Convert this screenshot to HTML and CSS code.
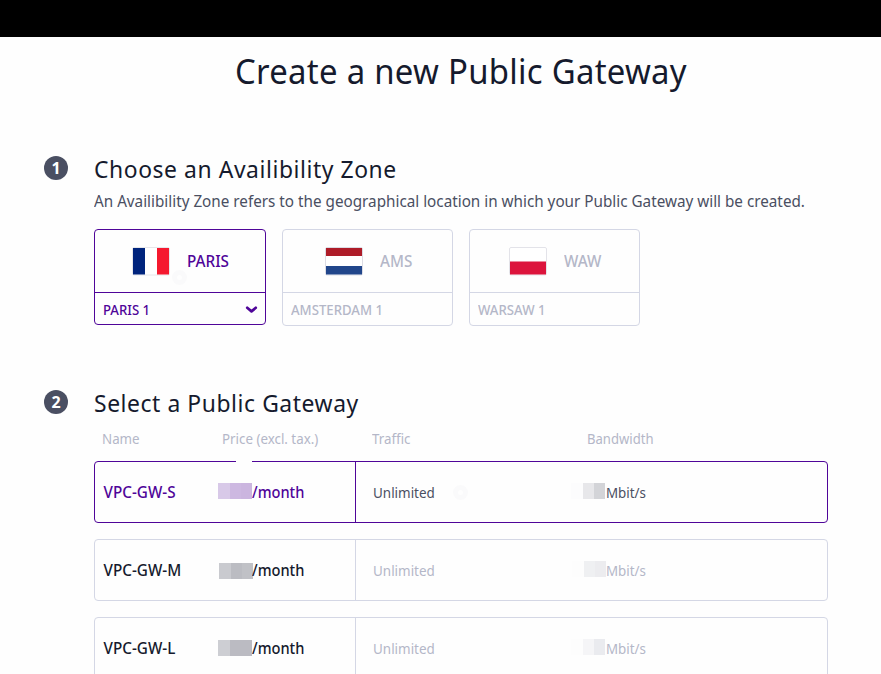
FILE: index.html
```html
<!DOCTYPE html>
<html lang="en">
<head>
<meta charset="utf-8">
<title>Create a new Public Gateway</title>
<link rel="stylesheet" href="styles.css">
</head>
<body>
<header class="topbar"></header>
<main>
  <h1><span>Create a new Public Gateway</span></h1>

  <section class="step zone">
    <span class="badge">1</span>
    <div class="content">
      <h2><span>Choose an Availibility Zone</span></h2>
      <p class="desc"><span>An Availibility Zone refers to the geographical location in which your Public Gateway will be created.</span></p>
      <div class="cards">
        <div class="card selected">
          <div class="region">
            <svg class="flag" width="38" height="29" viewBox="0 0 38 29"><rect x=".5" y=".5" width="37" height="27.5" rx="1.5" fill="#fff" stroke="#e6e6ea"/><path fill="#00247d" d="M1 1h12v26.5H1z"/><path fill="#f5192f" d="M25 1h12v26.5H25z"/></svg>
            <span>PARIS</span>
            <i class="dot"></i>
          </div>
          <div class="az"><span>PARIS 1</span>
            <svg width="13" height="9" viewBox="0 0 13 9"><path d="M2.2 2.8l4.3 3.6L10.8 2.8" fill="none" stroke="#4f0599" stroke-width="2.7" stroke-linecap="round" stroke-linejoin="round"/></svg>
          </div>
        </div>
        <div class="card ams">
          <div class="region">
            <svg class="flag" width="38" height="29" viewBox="0 0 38 29"><rect x=".5" y=".5" width="37" height="27.5" rx="1.5" fill="#fff" stroke="#dcdce4"/><path fill="#ae1c28" d="M1 1h36v8H1z"/><path fill="#21468b" d="M1 19h36v8.5H1z"/></svg>
            <span>AMS</span>
          </div>
          <div class="az"><span>AMSTERDAM 1</span></div>
        </div>
        <div class="card waw">
          <div class="region">
            <svg class="flag" width="38" height="29" viewBox="0 0 38 29"><rect x=".5" y=".5" width="37" height="27.5" rx="1.5" fill="#fff" stroke="#e3e3e9"/><path fill="#dc143c" d="M1 14.5h36v13H1z"/></svg>
            <span>WAW</span>
          </div>
          <div class="az"><span>WARSAW 1</span></div>
        </div>
      </div>
    </div>
  </section>

  <section class="step">
    <span class="badge">2</span>
    <div class="content">
      <h2><span>Select a Public Gateway</span></h2>
      <div class="grid head"><span>Name</span><span>Price (excl. tax.)</span><span>Traffic</span><span>Bandwidth</span></div>
      <div class="grid row selected">
        <i class="notch"></i>
        <strong>VPC-GW-S</strong>
        <div class="price"><i class="mask violet"></i><strong>/month</strong></div>
        <div class="traffic"><span>Unlimited</span><i class="dot"></i></div>
        <div class="band"><i class="mask rate"></i><span>Mbit/s</span></div>
      </div>
      <div class="grid row medium">
        <strong>VPC-GW-M</strong>
        <div class="price"><i class="mask gray"></i><strong>/month</strong></div>
        <div class="traffic"><span>Unlimited</span></div>
        <div class="band"><i class="mask rate"></i><span>Mbit/s</span></div>
      </div>
      <div class="grid row large">
        <strong>VPC-GW-L</strong>
        <div class="price"><i class="mask gray"></i><strong>/month</strong></div>
        <div class="traffic"><span>Unlimited</span></div>
        <div class="band"><i class="mask rate"></i><span>Mbit/s</span></div>
      </div>
    </div>
  </section>
</main>
</body>
</html>
```
FILE: styles.css
```css
* { box-sizing: border-box; }
html { height: 100%; overflow: hidden; }
body {
  margin: 0;
  height: 674px;
  overflow: hidden;
  background: #fefefe;
  color: #151a2d;
  font-family: "Noto Sans", "Open Sans", sans-serif;
  white-space: nowrap;
}
.topbar { height: 37px; background: #000; }
h1, h2, p { margin: 0; font-weight: 400; }

/* Slightly narrowed lettering */
h1 span, h2 span, .desc span, .region span, .az span, .grid span, .grid strong {
  display: inline-block;
  transform: scaleX(.953);
  transform-origin: left;
}

h1 {
  padding: 10px 0 0 235px;
  font-size: 34.5px;
  line-height: 48px;
  letter-spacing: .3px;
}
h2 { font-size: 24px; line-height: 32px; letter-spacing: .6px; }
.step { display: flex; padding-left: 44px; }
.zone { margin-top: 58px; height: 234px; }
.badge {
  width: 24px;
  height: 24px;
  margin: 3px 26px 0 0;
  border-radius: 50%;
  background: #4a4f62;
  color: #fff;
  font: bold 16px/25px "Noto Sans", sans-serif;
  text-align: center;
}
.content { width: 734px; }
.desc { margin-top: 4px; font-size: 16px; line-height: 24px; color: #4a4f62; }
.cards { display: flex; align-items: flex-start; gap: 16px; margin-top: 16px; }
.card {
  width: 171px;
  height: 97px;
  border: 1px solid #d4d7e5;
  border-radius: 4px;
  color: #b4b7c8;
  font-weight: 500;
}
.card.selected { width: 172px; height: 96px; border-color: #4f0599; color: #4f0599; }
.region {
  position: relative;
  display: flex;
  align-items: center;
  height: 63px;
  padding-left: 37px;
  border-bottom: 1px solid #d4d7e5;
}
.selected .region { border-color: #4f0599; }
.region span { margin-left: 17px; }
.ams .region { padding-left: 42px; }
.waw .region { padding-left: 39px; }
.az {
  display: flex;
  align-items: center;
  justify-content: space-between;
  height: 33px;
  padding: 0 7px 0 8px;
  font-size: 14px;
}
.az span { transform: scaleX(.94); }
.grid { display: grid; grid-template-columns: 123px 137px 214px 1fr; align-items: center; }
.head {
  grid-template-columns: 120px 150px 215px 1fr;
  height: 24px;
  margin: 7px 0 11px;
  padding: 1px 0 0 8px;
  font-size: 14px;
  color: #b4b7c8;
}
.head span:last-child { transform: scaleX(.935); }
.row {
  position: relative;
  height: 62px;
  margin-bottom: 16px;
  border: 1px solid #d4d7e5;
  border-radius: 4px;
}
.row strong { font-weight: 500; font-size: 16px; }
.row > strong { padding-left: 9px; }
.price { display: flex; align-items: center; height: 60px; border-right: 1px solid #d4d7e5; width: 138px; }
.price strong { transform: scaleX(.915); }
.traffic { display: flex; align-items: center; padding-left: 18px; font-size: 14px; color: #b4b7c8; }
.traffic span { transform: scaleX(.96); }
.band { display: flex; align-items: center; padding-left: 2px; font-size: 14px; color: #b4b7c8; }
.row.selected { border-color: #4f0599; color: #4f0599; }
.selected .price { border-color: #4f0599; }
.selected .traffic, .selected .band { color: #4a4f62; }
.mask { width: 34px; height: 16px; margin-top: -3px; }
.violet { background: linear-gradient(90deg, #d8c9e8 12px, #cdb8e1 12px 23px, #cbb5df 23px); }
.gray { background: linear-gradient(90deg, #c9cacf 12px, #bbbcc2 12px 23px, #c0c1c6 23px); }
.medium .price .mask { margin-top: 1px; margin-left: 1px; margin-right: -1px; }
.large .gray { background: linear-gradient(90deg, #cdced3 12px, #bbbbc2 12px); margin-top: -1px; }
.rate { background: linear-gradient(90deg, #fcfcfd 12px, #e7e7ea 12px 23px, #d3d4d8 23px); }
.band span { position: relative; left: .5px; }
.medium .rate { margin-left: 1px; margin-right: -1px; background: linear-gradient(90deg, #fdfdfd 12px, #eff0f2 12px 23px, #ececef 23px); }
.large .rate { background: linear-gradient(90deg, #fdfdfd 12px, #f5f5f7 12px 23px, #eaebef 23px); }
.dot { width: 15px; height: 15px; margin-left: 16px; border: 5px solid #fafafb; border-radius: 50%; }
.region .dot { position: absolute; left: 77px; top: 40px; margin: 0; }
.notch { position: absolute; left: 141px; top: -1px; width: 16px; height: 1px; background: #fefefe; }
```
